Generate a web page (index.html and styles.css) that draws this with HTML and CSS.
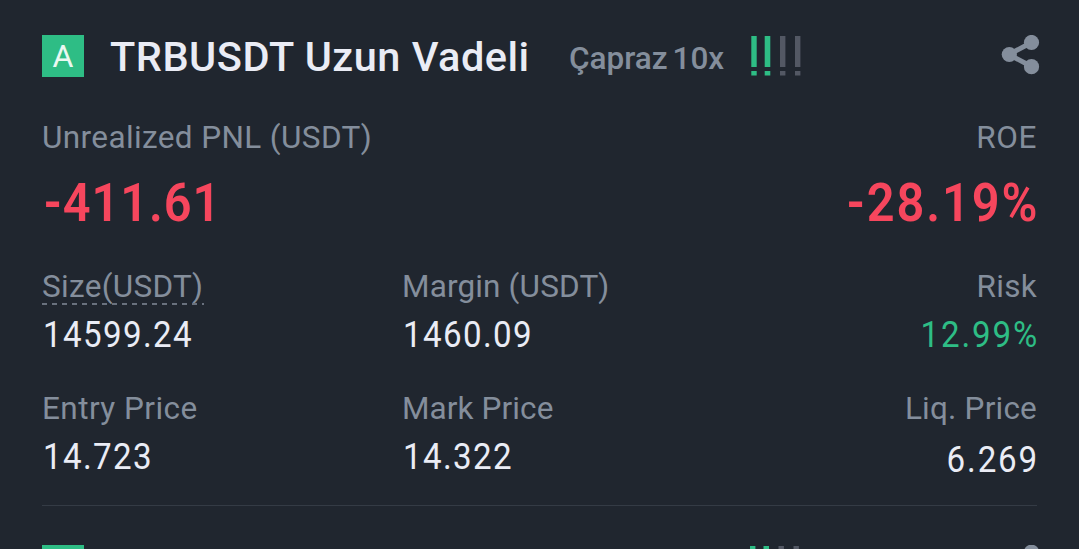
FILE: index.html
```
<!DOCTYPE html>
<html lang="tr">
<head>
<meta charset="utf-8">
<title>TRBUSDT</title>
<link rel="stylesheet" href="styles.css">
</head>
<body>
<main class="position">
  <header class="head">
    <span class="badge"><span class="badge-letter">A</span></span>
    <h1 class="title">TRBUSDT Uzun Vadeli</h1>
    <span class="mode">Çapraz <span class="leverage">10x</span></span>
    <svg class="signal" width="52" height="42" viewBox="0 0 52 42">
      <path class="on" d="M1.3 1h5.4v31H1.3zM1.3 36h5.4v4.5H1.3zM14.7 1h5.6v31h-5.6zM14.7 36h5.6v4.5h-5.6z"/>
      <path class="off" d="M30 1h5.4v31H30zM30 36h5.4v4.5H30zM45 1h5.4v31H45zM45 36h5.4v4.5H45z"/>
    </svg>
    <svg class="share" width="40" height="42" viewBox="0 0 40 42">
      <path d="M31.5 7.5L9 19.5l22.5 12" fill="none" stroke="#848e9c" stroke-width="5"/>
      <circle cx="31.5" cy="7.5" r="7.6"/><circle cx="9.3" cy="19.5" r="7.6"/><circle cx="31.5" cy="31.7" r="7.6"/>
    </svg>
  </header>
  <section class="row pnl">
    <div class="cell"><div class="label l-pnl">Unrealized PNL (USDT)</div><div class="big b-pnl">-411.61</div></div>
    <div class="cell end"><div class="label l-roe">ROE</div><div class="big b-roe">-28.19%</div></div>
  </section>
  <section class="row sizes">
    <div class="cell"><div class="label l-size">Size(USDT)<svg class="dash" width="162" height="2"><path d="M0 1h162" stroke="#69717e" stroke-width="2" stroke-dasharray="5 5"/></svg></div><div class="value">14599.24</div></div>
    <div class="cell"><div class="label l-margin">Margin (USDT)</div><div class="value">1460.09</div></div>
    <div class="cell end"><div class="label l-risk">Risk</div><div class="value green">12.99%</div></div>
  </section>
  <section class="row prices">
    <div class="cell"><div class="label l-entry">Entry Price</div><div class="value">14.723</div></div>
    <div class="cell"><div class="label l-mark">Mark Price</div><div class="value">14.322</div></div>
    <div class="cell end"><div class="label l-liq">Liq. Price</div><div class="value liq">6.269</div></div>
  </section>
</main>
<div class="next">
  <span class="badge"></span>
  <svg class="signal next-signal" width="52" height="42" viewBox="0 0 52 42">
    <path class="on" d="M1 1h5.4v31H1zM14.5 1H20v31h-5.5z"/>
    <path class="off" d="M29.5 1h5.4v31h-5.4zM44.5 1h5.4v31h-5.4z"/>
  </svg>
  <svg class="share" width="40" height="42" viewBox="0 0 40 42"><circle cx="31.5" cy="7.2" r="7.6"/></svg>
</div>
</body>
</html>
```
FILE: styles.css
```
* { box-sizing: border-box; }
body {
  margin: 0;
  height: 549px;
  overflow: hidden;
  background: #20262f;
  color: #eaecf5;
  font-family: Roboto, "Liberation Sans", sans-serif;
  white-space: nowrap;
}
.position {
  margin: 0 42px;
  padding-top: 35px;
  height: 506px;
  border-bottom: 1px solid #343b45;
}
.head { display: flex; height: 42px; margin-right: -3px; }
.badge {
  width: 42px; height: 42px;
  flex: none;
  background: #2ebd85;
  text-align: center;
}
.badge-letter { font: 400 32px/43px Roboto, sans-serif; color: #e9f8f1; }
.title { margin: 0 0 0 26px; width: 459px; font-size: 41.5px; line-height: 44px; font-weight: 500; letter-spacing: .5px; }
.mode { width: 181px; color: #848e9c; font-size: 31.5px; line-height: 48px; font-weight: 500; }
.leverage { margin-left: -3px; }
.on { fill: #2ebd85; }
.off { fill: #535864; }
.share { margin-left: auto; fill: #848e9c; }
.row { display: grid; grid-template-columns: 360px 360px 1fr; }
.pnl { margin-top: 42px; grid-template-columns: 1fr 1fr; }
.sizes { margin-top: 35px; }
.prices { margin-top: 35px; }
.end { text-align: right; }
.label { position: relative; height: 36px; font-size: 31.5px; line-height: 38px; color: #848e9c; letter-spacing: .3px; }
.l-pnl { letter-spacing: .38px; }
.l-roe { letter-spacing: .6px; }
.l-margin { letter-spacing: .15px; }
.l-mark { letter-spacing: .1px; }
.l-entry { letter-spacing: .45px; }
.l-liq { letter-spacing: .2px; }
.big {
  margin-top: 18px;
  height: 60px;
  font-size: 53px;
  line-height: 60px;
  font-weight: 600;
  color: #f6465d;
  transform: scaleX(.92);
  transform-origin: left;
}
.b-pnl { letter-spacing: 1px; padding-left: 2px; }
.b-roe { letter-spacing: 2.1px; }
.value {
  margin-top: 11px;
  padding-left: 1px;
  height: 40px;
  font-size: 36px;
  line-height: 40px;
  letter-spacing: 1.5px;
  transform: scaleX(.92);
  transform-origin: left;
}
.end .big, .end .value { transform-origin: right; margin-right: -2px; }
.end .value { letter-spacing: 2px; }
.green { color: #2ebd85; }
.liq { position: relative; top: 3px; }
.dash { position: absolute; left: 0; top: 35px; }
.next { display: flex; height: 4px; overflow: hidden; margin: 39px 39px 0 42px; }
.next-signal { margin-left: 664.5px; }
```
